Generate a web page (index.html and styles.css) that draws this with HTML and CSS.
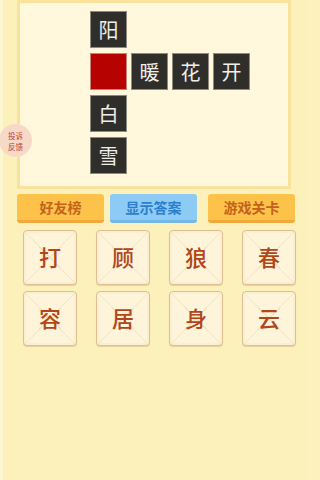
FILE: index.html
```html
<!DOCTYPE html>
<html lang="zh-CN">
<head>
<meta charset="utf-8">
<title>成语填字</title>
<link rel="stylesheet" href="styles.css">
</head>
<body>
<div class="page">
  <div class="board">
    <div class="cross">
      <div class="cell c1 r1">阳</div>
      <div class="cell blank c1 r2"></div>
      <div class="cell c2 r2">暖</div>
      <div class="cell c3 r2">花</div>
      <div class="cell c4 r2">开</div>
      <div class="cell c1 r3">白</div>
      <div class="cell c1 r4">雪</div>
    </div>
  </div>
  <div class="feedback">投诉<br>反馈</div>
  <div class="actions">
    <div class="btn yellow">好友榜</div>
    <div class="btn blue mid">显示答案</div>
    <div class="btn yellow">游戏关卡</div>
  </div>
  <div class="choices">
    <div class="tile">打</div>
    <div class="tile">顾</div>
    <div class="tile">狼</div>
    <div class="tile">春</div>
    <div class="tile">容</div>
    <div class="tile">居</div>
    <div class="tile">身</div>
    <div class="tile">云</div>
  </div>
</div>
</body>
</html>
```
FILE: styles.css
```css
html, body {
  margin: 0;
  padding: 0;
  background: #fdf2bd;
}
body {
  font-family: "Noto Sans CJK SC", "Noto Sans", sans-serif;
  width: 306px;
  height: 480px;
  overflow: hidden;
}
.page {
  position: relative;
  height: 480px;
  background: linear-gradient(to right, #fef6cf 0, #fef6cf 3px, #fdf1bb 3px);
}
.board {
  margin-left: 17px;
  width: 274px;
  height: 189px;
  box-sizing: border-box;
  border: 3px solid #f9e39c;
  background: #fff8dc;
  padding: 8px 0 0 70px;
}
.cross {
  display: grid;
  grid-template-columns: repeat(4, 37px);
  grid-template-rows: repeat(4, 37px);
  column-gap: 4px;
  row-gap: 5px;
}
.cell {
  background: #302e2a;
  border: 1px solid #8d8a80;
  box-sizing: border-box;
  color: #efefea;
  font-size: 20px;
  line-height: 35px;
  text-align: center;
}
.cell.blank {
  background: #b70202;
  border-color: #c9837a;
}
.c1 { grid-column: 1; }
.c2 { grid-column: 2; }
.c3 { grid-column: 3; }
.c4 { grid-column: 4; }
.r1 { grid-row: 1; }
.r2 { grid-row: 2; }
.r3 { grid-row: 3; }
.r4 { grid-row: 4; }

.feedback {
  position: absolute;
  left: -1px;
  top: 124px;
  width: 33px;
  height: 33px;
  border-radius: 50%;
  background: #f6d9c6;
  color: #b8423a;
  font-size: 7.5px;
  line-height: 11px;
  text-align: center;
  padding-top: 6px;
  box-sizing: border-box;
}

.actions {
  display: flex;
  margin: 5px 0 0 17px;
}
.btn {
  width: 87px;
  height: 29px;
  box-sizing: border-box;
  border-radius: 3px;
  font-size: 14px;
  font-weight: bold;
  text-align: center;
  line-height: 27px;
}
.btn.yellow {
  background: #fdc24a;
  border-bottom: 3px solid #f2a93a;
  color: #c4621c;
}
.btn.blue {
  background: #8dcbf4;
  border-bottom: 3px solid #72b7e6;
  color: #2c7fcc;
}
.btn.mid {
  margin: 0 11px 0 6px;
}

.choices {
  display: grid;
  grid-template-columns: repeat(4, 54px);
  grid-auto-rows: 55px;
  column-gap: 19px;
  row-gap: 6px;
  margin: 7px 0 0 23px;
}
.tile {
  box-sizing: border-box;
  border: 1.5px solid #dcc094;
  border-radius: 4px;
  box-shadow: inset 0 0 0 2px #fbefd2, 0 1px 1px #e6cf9f;
  background:
    linear-gradient(to top right, transparent calc(50% - 0.5px), #f2e3c3 calc(50% - 0.5px), #f2e3c3 calc(50% + 0.5px), transparent calc(50% + 0.5px)),
    linear-gradient(to bottom right, transparent calc(50% - 0.5px), #f2e3c3 calc(50% - 0.5px), #f2e3c3 calc(50% + 0.5px), transparent calc(50% + 0.5px)),
    #fdf4da;
  color: #b0461a;
  font-size: 22px;
  font-weight: 500;
  text-align: center;
  line-height: 51px;
}
```
